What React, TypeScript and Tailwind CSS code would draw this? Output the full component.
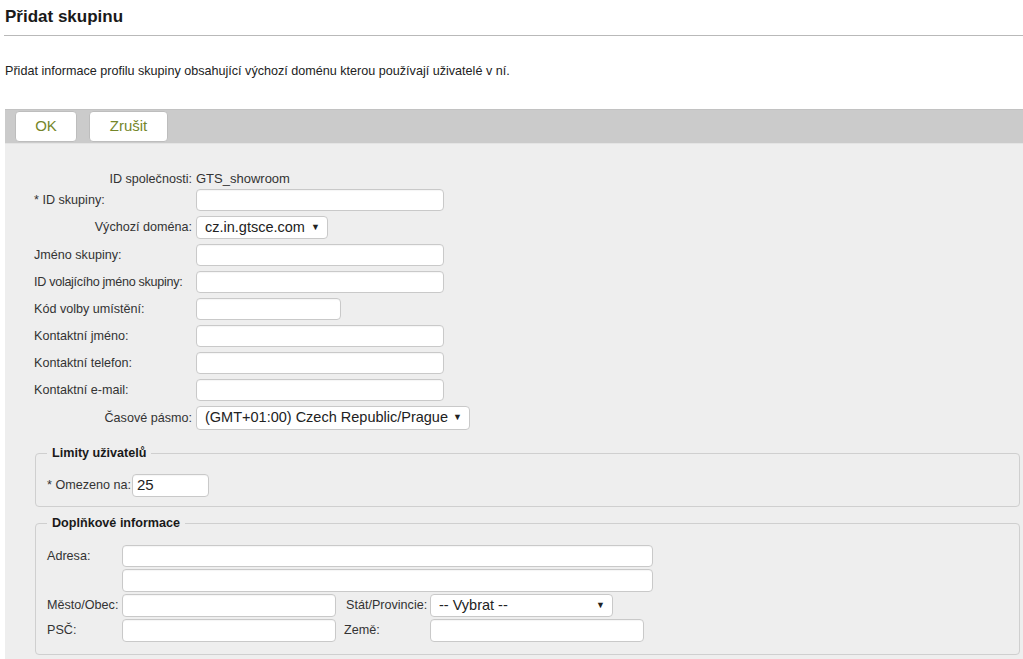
import React from "react";

const input =
  "h-[22px] bg-white border border-[#c9c9c9] rounded-[4px] shadow-[inset_0_1px_1px_rgba(0,0,0,0.04)]";

const lbl = "text-[12.6px] text-[#333]";

function Select({ value, width, h = "h-[23px]" }: { value: string; width: string; h?: string }) {
  return (
    <div
      className={`${width} ${h} bg-white border border-[#c9c9c9] rounded-[4px] flex items-center justify-between pl-[8px] pr-[7px] text-[14.5px] text-[#222]`}
    >
      <span>{value}</span>
      <span className="text-[9px] text-[#222]">▼</span>
    </div>
  );
}

function Row({
  label,
  right,
  tight,
  children,
}: {
  label: string;
  right?: boolean;
  tight?: boolean;
  children: React.ReactNode;
}) {
  return (
    <div className="flex items-center">
      <div
        className={`w-[162px] pr-[4px] whitespace-nowrap ${lbl} ${right ? "text-right" : "text-left"} ${tight ? "tracking-[-0.3px]" : ""}`}
      >
        {label}
      </div>
      {children}
    </div>
  );
}

export default function App() {
  return (
    <div className="w-full h-[659px] overflow-hidden bg-white font-['Liberation_Sans',Arial,sans-serif] text-[#222]">
      {/* header */}
      <div className="ml-[4px] border-b border-[#b9b9b9] pl-[1px] pt-[7px] pb-[8px]">
        <h2 className="text-[17px] leading-[20px] font-bold text-[#1a1a1a]">Přidat skupinu</h2>
      </div>
      <p className="ml-[5px] mt-[27px] text-[12.6px] leading-[16px] text-[#222]">
        Přidat informace profilu skupiny obsahující výchozí doménu kterou používají uživatelé v ní.
      </p>

      {/* toolbar */}
      <div className="ml-[5px] mt-[30px] h-[34px] bg-[#cbcbcb] border-t border-[#c2c2c2] flex items-start gap-[12px] pl-[10px] pt-[1px]">
        <button className="w-[62px] h-[31px] bg-white border border-[#bdbdbd] rounded-[4px] text-[15px] text-[#75862a]">
          OK
        </button>
        <button className="w-[79px] h-[31px] bg-white border border-[#bdbdbd] rounded-[4px] text-[15px] text-[#75862a]">
          Zrušit
        </button>
      </div>

      {/* panel */}
      <div className="ml-[5px] h-[600px] bg-[#eeeeee] border-t border-[#e4e4e4] pl-[29px] pr-[3px] pt-[27px]">
        <div className="flex items-center h-[16px]">
          <div className={`w-[162px] pr-[4px] text-right ${lbl}`}>ID společnosti:</div>
          <div className="text-[13px] text-[#333]">GTS_showroom</div>
        </div>

        <div className="flex flex-col gap-[5px] mt-[2px]">
          <Row label="* ID skupiny:">
            <div className={`${input} w-[248px]`} />
          </Row>
          <Row label="Výchozí doména:" right>
            <Select value="cz.in.gtsce.com" width="w-[132px]" />
          </Row>
          <Row label="Jméno skupiny:">
            <div className={`${input} w-[248px]`} />
          </Row>
          <Row label="ID volajícího jméno skupiny:" tight>
            <div className={`${input} w-[248px]`} />
          </Row>
          <Row label="Kód volby umístění:">
            <div className={`${input} w-[145px]`} />
          </Row>
          <Row label="Kontaktní jméno:">
            <div className={`${input} w-[248px]`} />
          </Row>
          <Row label="Kontaktní telefon:">
            <div className={`${input} w-[248px]`} />
          </Row>
          <Row label="Kontaktní e-mail:">
            <div className={`${input} w-[248px]`} />
          </Row>
          <Row label="Časové pásmo:" right>
            <Select value="(GMT+01:00) Czech Republic/Prague" width="w-[274px]" h="h-[24px]" />
          </Row>
        </div>

        {/* limits */}
        <fieldset className="mt-[15px] ml-[1px] border border-[#cfcfcf] rounded-[4px] pl-[11px] pr-[11px] pt-[13px] pb-[9px]">
          <legend className="px-[5px] text-[12.6px] leading-[16px] font-bold text-[#1a1a1a]">
            Limity uživatelů
          </legend>
          <div className="flex items-center">
            <span className={`${lbl} mr-[1px]`}>* Omezeno na:</span>
            <div className={`${input} w-[77px] h-[23px] flex items-center pl-[4px] text-[15px] text-[#222]`}>
              25
            </div>
          </div>
        </fieldset>

        {/* extra */}
        <fieldset className="mt-[8px] ml-[1px] border border-[#cfcfcf] rounded-[4px] pl-[11px] pr-[11px] pt-[14px] pb-[12px]">
          <legend className="px-[5px] text-[12.6px] leading-[16px] font-bold text-[#1a1a1a]">
            Doplňkové informace
          </legend>
          <div className="flex flex-col gap-[2px]">
            <div className="flex items-center">
              <span className={`w-[75px] ${lbl}`}>Adresa:</span>
              <div className={`${input} w-[531px]`} />
            </div>
            <div className="flex items-center">
              <span className="w-[75px]" />
              <div className={`${input} w-[531px] h-[23px]`} />
            </div>
            <div className="flex items-center">
              <span className={`w-[75px] whitespace-nowrap ${lbl}`}>Město/Obec:</span>
              <div className={`${input} w-[214px] h-[23px]`} />
              <span className={`w-[84px] ml-[10px] whitespace-nowrap ${lbl}`}>Stát/Provincie:</span>
              <Select value="-- Vybrat --" width="w-[183px]" />
            </div>
            <div className="flex items-center">
              <span className={`w-[75px] ${lbl}`}>PSČ:</span>
              <div className={`${input} w-[214px] h-[23px]`} />
              <span className={`w-[86px] ml-[8px] ${lbl}`}>Země:</span>
              <div className={`${input} w-[214px] h-[23px]`} />
            </div>
          </div>
        </fieldset>
      </div>
    </div>
  );
}
